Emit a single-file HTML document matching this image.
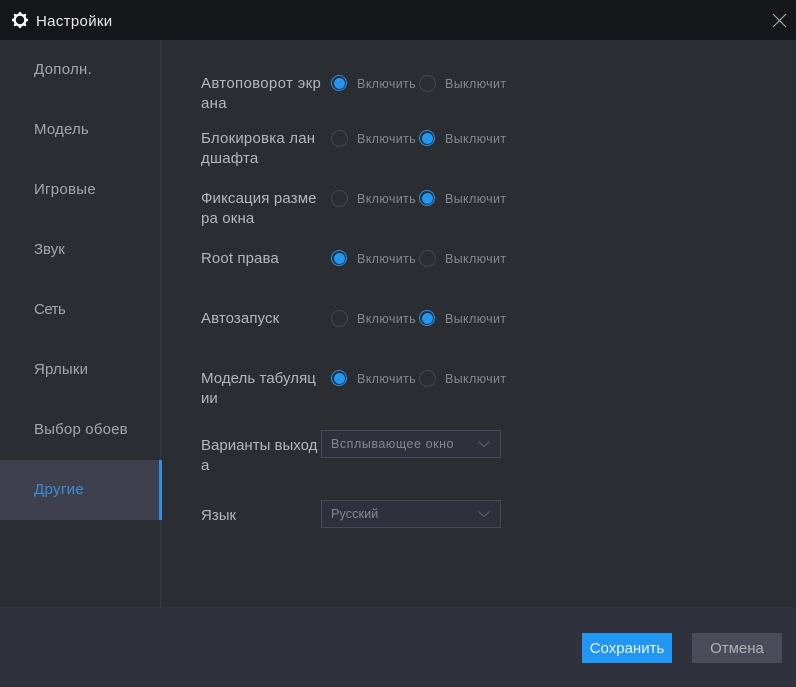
<!DOCTYPE html>
<html><head><meta charset="utf-8"><style>
html,body{margin:0;padding:0;background:#2a2d32;width:796px;height:687px;overflow:hidden}
body{position:relative;font-family:"Liberation Sans","Noto Sans CJK SC",sans-serif}
div,span{position:absolute;white-space:nowrap}
.nav{left:34px;font-size:15px;line-height:20px;color:#a4a7ad}
.lb{left:201px;font-size:15px;line-height:20px;color:#b4b7bb}
.o{font-size:12.5px;line-height:16px;color:#85888e;letter-spacing:.37px}
.r{width:15px;height:15px;border:1px solid #44474f;border-radius:50%;box-sizing:content-box}
.r.on{border:1.5px solid #2196f3;width:14px;height:14px}
.r.on:after{content:"";position:absolute;left:1.5px;top:1.5px;width:11px;height:11px;border-radius:50%;background:#2196f3}
.sel{left:321px;width:178px;height:26px;background:#2e313b;border:1px solid #454957}
.sel span{left:9px;top:5px;font-size:12.5px;line-height:16px;color:#85888e}
.sel svg{position:absolute;left:155px;top:7px}
</style></head><body>
<div style="left:0;top:0;width:796px;height:40px;background:#16171b"></div>
<svg style="position:absolute;left:12px;top:12px" width="16" height="16" viewBox="0 0 16 16"><circle cx="8" cy="8" r="5.4" fill="none" stroke="#fff" stroke-width="2.4"/><g fill="#fff"><rect x="6.8" y="0" width="2.4" height="2"/><rect x="6.8" y="14" width="2.4" height="2"/><rect x="0" y="6.8" width="2" height="2.4"/><rect x="14" y="6.8" width="2" height="2.4"/><rect x="2" y="2" width="2.2" height="2.2"/><rect x="11.8" y="2" width="2.2" height="2.2"/><rect x="2" y="11.8" width="2.2" height="2.2"/><rect x="11.8" y="11.8" width="2.2" height="2.2"/></g></svg>
<div style="left:36px;top:12px;font-size:15px;line-height:20px;color:#e8e9ea;letter-spacing:.33px">Настройки</div>
<svg style="position:absolute;left:772px;top:13px" width="15" height="15" viewBox="0 0 15 15"><path d="M1 1L14 14M14 1L1 14" stroke="#a8a9ad" stroke-width="1.1" fill="none"/></svg>

<div style="left:160px;top:40px;width:1px;height:567px;background:#363943"></div>
<div style="left:0;top:460px;width:159px;height:60px;background:#3e414d"></div>
<div style="left:159px;top:460px;width:3px;height:60px;background:#2f8fe0"></div>

<div class="nav" style="top:60px;letter-spacing:.3px">Дополн.</div>
<div class="nav" style="top:120px;letter-spacing:.17px">Модель</div>
<div class="nav" style="top:180px;letter-spacing:.28px">Игровые</div>
<div class="nav" style="top:240px">Звук</div>
<div class="nav" style="top:300px;letter-spacing:-.5px">Сеть</div>
<div class="nav" style="top:360px;letter-spacing:.17px">Ярлыки</div>
<div class="nav" style="top:420px;letter-spacing:.18px">Выбор обоев</div>
<div class="nav" style="top:480px;color:#3b8fd6;letter-spacing:.33px">Другие</div>

<div class="lb" style="top:74px;letter-spacing:.33px">Автоповорот экр</div>
<div class="lb" style="top:94px;letter-spacing:.33px">ана</div>
<div class="lb" style="top:129px;letter-spacing:.21px">Блокировка лан</div>
<div class="lb" style="top:149px;letter-spacing:.21px">дшафта</div>
<div class="lb" style="top:189px;letter-spacing:.14px">Фиксация разме</div>
<div class="lb" style="top:209px;letter-spacing:.14px">ра окна</div>
<div class="lb" style="top:249px;letter-spacing:.1px">Root права</div>
<div class="lb" style="top:309px;letter-spacing:.1px">Автозапуск</div>
<div class="lb" style="top:369px;letter-spacing:.07px">Модель табуляц</div>
<div class="lb" style="top:389px">ии</div>
<div class="lb" style="top:436px">Варианты выход</div>
<div class="lb" style="top:456px">а</div>
<div class="lb" style="top:506px">Язык</div>

<div class="r on" style="left:331px;top:75px"></div><div class="o" style="left:357px;top:76px">Включить</div><div class="r" style="left:419px;top:75px"></div><div class="o" style="left:445px;top:76px">Выключит</div>
<div class="r" style="left:331px;top:130px"></div><div class="o" style="left:357px;top:131px">Включить</div><div class="r on" style="left:419px;top:130px"></div><div class="o" style="left:445px;top:131px">Выключит</div>
<div class="r" style="left:331px;top:190px"></div><div class="o" style="left:357px;top:191px">Включить</div><div class="r on" style="left:419px;top:190px"></div><div class="o" style="left:445px;top:191px">Выключит</div>
<div class="r on" style="left:331px;top:250px"></div><div class="o" style="left:357px;top:251px">Включить</div><div class="r" style="left:419px;top:250px"></div><div class="o" style="left:445px;top:251px">Выключит</div>
<div class="r" style="left:331px;top:310px"></div><div class="o" style="left:357px;top:311px">Включить</div><div class="r on" style="left:419px;top:310px"></div><div class="o" style="left:445px;top:311px">Выключит</div>
<div class="r on" style="left:331px;top:370px"></div><div class="o" style="left:357px;top:371px">Включить</div><div class="r" style="left:419px;top:370px"></div><div class="o" style="left:445px;top:371px">Выключит</div>

<div class="sel" style="top:430px"><span style="letter-spacing:.55px">Всплывающее окно</span><svg width="14" height="12" viewBox="0 0 14 12"><path d="M1.5 3.5L7 8.5L12.5 3.5" stroke="#62656e" stroke-width="1" fill="none"/></svg></div>
<div class="sel" style="top:500px"><span style="letter-spacing:.15px">Русский</span><svg width="14" height="12" viewBox="0 0 14 12"><path d="M1.5 3.5L7 8.5L12.5 3.5" stroke="#62656e" stroke-width="1" fill="none"/></svg></div>

<div style="left:0;top:607px;width:796px;height:80px;background:#2f323d"></div>
<div style="left:582px;top:633px;width:90px;height:30px;background:#2196f3;color:#e6f2fc;font-size:15px;line-height:32px;text-align:center">Сохранить</div>
<div style="left:692px;top:633px;width:90px;height:30px;background:#4a4d59;color:#b0b2b7;font-size:15px;line-height:32px;text-align:center">Отмена</div>
</body></html>
